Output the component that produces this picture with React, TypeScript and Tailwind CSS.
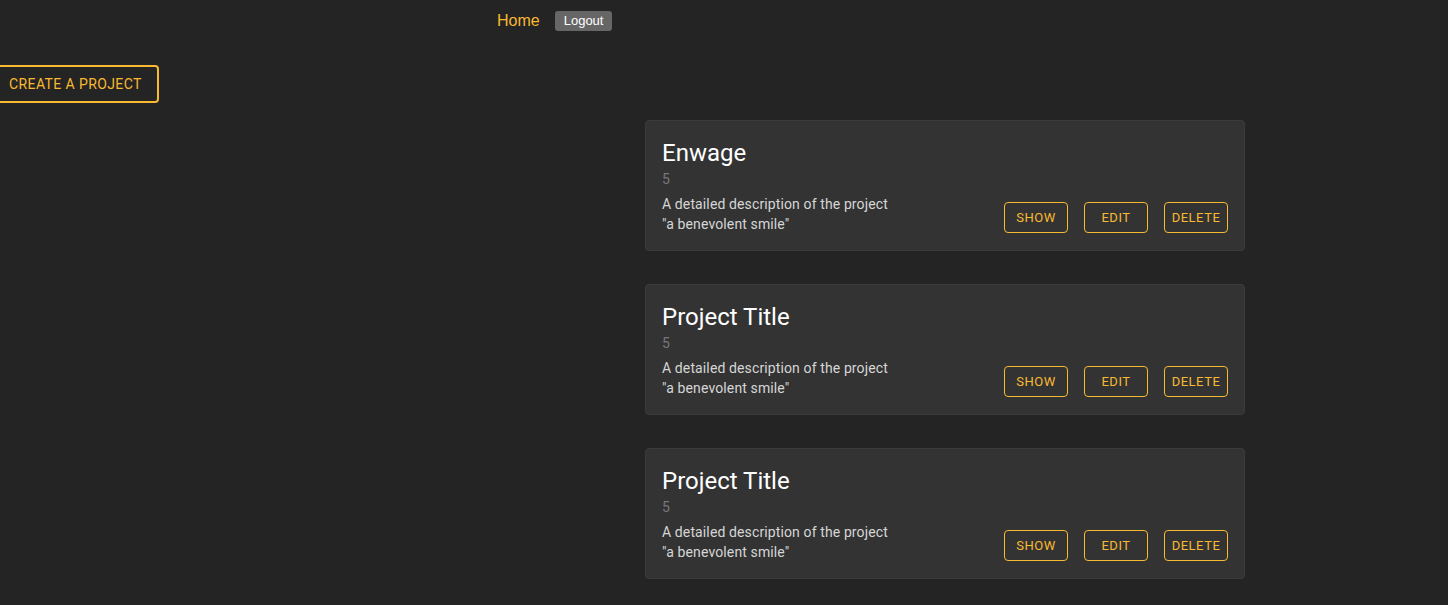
import React from "react";

const projects = [
  { title: "Enwage", count: 5, description: "A detailed description of the project", quote: '"a benevolent smile"' },
  { title: "Project Title", count: 5, description: "A detailed description of the project", quote: '"a benevolent smile"' },
  { title: "Project Title", count: 5, description: "A detailed description of the project", quote: '"a benevolent smile"' },
];

const ActionButton = ({ label }: { label: string }) => (
  <button className="w-[64px] h-[31px] border border-[#f9b931] rounded-[4px] text-[#f9b931] text-[13px] font-normal tracking-[0.5px] uppercase flex items-center justify-center">
    {label}
  </button>
);

const ProjectCard = ({ project }: { project: (typeof projects)[number] }) => (
  <div className="w-[600px] bg-[#333333] border border-[#3b3b3b] rounded-[4px] px-4 pt-4 pb-4">
    <div className="text-[24px] leading-[32px] text-white">{project.title}</div>
    <div className="text-[14px] leading-[24px] text-[#777777] -mt-[2px]">{project.count}</div>
    <div className="flex items-end justify-between mt-[3px]">
      <div className="text-[14px] leading-[20px] tracking-[0.12px] text-[#d6d6d6]">
        <div>{project.description}</div>
        <div>{project.quote}</div>
      </div>
      <div className="flex gap-4 mb-[1px]">
        <ActionButton label="Show" />
        <ActionButton label="Edit" />
        <ActionButton label="Delete" />
      </div>
    </div>
  </div>
);

export default function App() {
  return (
    <div className="min-h-[605px] bg-[#242424] font-['Roboto',sans-serif] overflow-hidden">
      {/* top nav */}
      <div className="flex items-center gap-[15px] pl-[497px] pt-[9px] font-['Liberation_Sans',Arial,sans-serif]">
        <a className="text-[16px] text-[#f9b931]">Home</a>
        <button className="h-[20px] px-[9px] bg-[#666666] text-white text-[13px] rounded-[3px]">Logout</button>
      </div>

      <div className="mt-[32px] -ml-[8px]">
        <button className="h-[38px] px-[15px] border-2 border-[#f9b931] rounded-[4px] text-[#f9b931] text-[14px] tracking-[0.4px] uppercase">
          Create a project
        </button>
      </div>

      <div className="flex flex-col gap-[33px] ml-[645px] mt-[17px] pb-8">
        {projects.map((p, i) => (
          <ProjectCard key={i} project={p} />
        ))}
      </div>
    </div>
  );
}
